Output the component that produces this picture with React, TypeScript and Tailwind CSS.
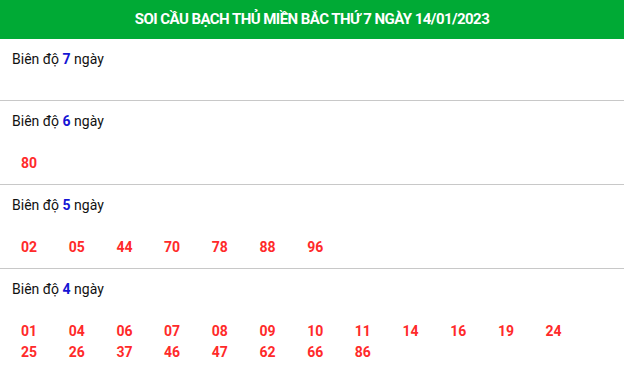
const sections: { days: number; nums: string[] }[] = [
  { days: 7, nums: [] },
  { days: 6, nums: ['80'] },
  { days: 5, nums: ['02', '05', '44', '70', '78', '88', '96'] },
  {
    days: 4,
    nums: ['01', '04', '06', '07', '08', '09', '10', '11', '14', '16', '19', '24', '25', '26', '37', '46', '47', '62', '66', '86'],
  },
];

export default function App() {
  return (
    <div className="w-[624px] h-[373px] overflow-hidden bg-white font-['Roboto',sans-serif]">
      {/* Title bar */}
      <div className="h-[39px] bg-[#00aa35] flex items-center justify-center">
        <h2 className="text-white font-bold text-[15px] tracking-[-0.55px]">
          SOI CẦU BẠCH THỦ MIỀN BẮC THỨ 7 NGÀY 14/01/2023
        </h2>
      </div>

      {sections.map((s) => (
        <div key={s.days} className="border-b border-[#c8c8c8] px-3 pt-[10px]">
          <p className="text-[14px] leading-[20px] text-[#111]">
            Biên độ <span className="font-bold text-[#1515d4]">{s.days}</span> ngày
          </p>
          {s.nums.length === 0 ? (
            <div className="h-[31px]" />
          ) : (
            <div className="flex flex-wrap pl-[9px] pt-[22px] pb-[10px] w-[600px]">
              {s.nums.map((n) => (
                <span key={n} className="w-[47.7px] text-[14px] leading-[21px] font-bold text-[#ff2a2a]">
                  {n}
                </span>
              ))}
            </div>
          )}
        </div>
      ))}
    </div>
  );
}
